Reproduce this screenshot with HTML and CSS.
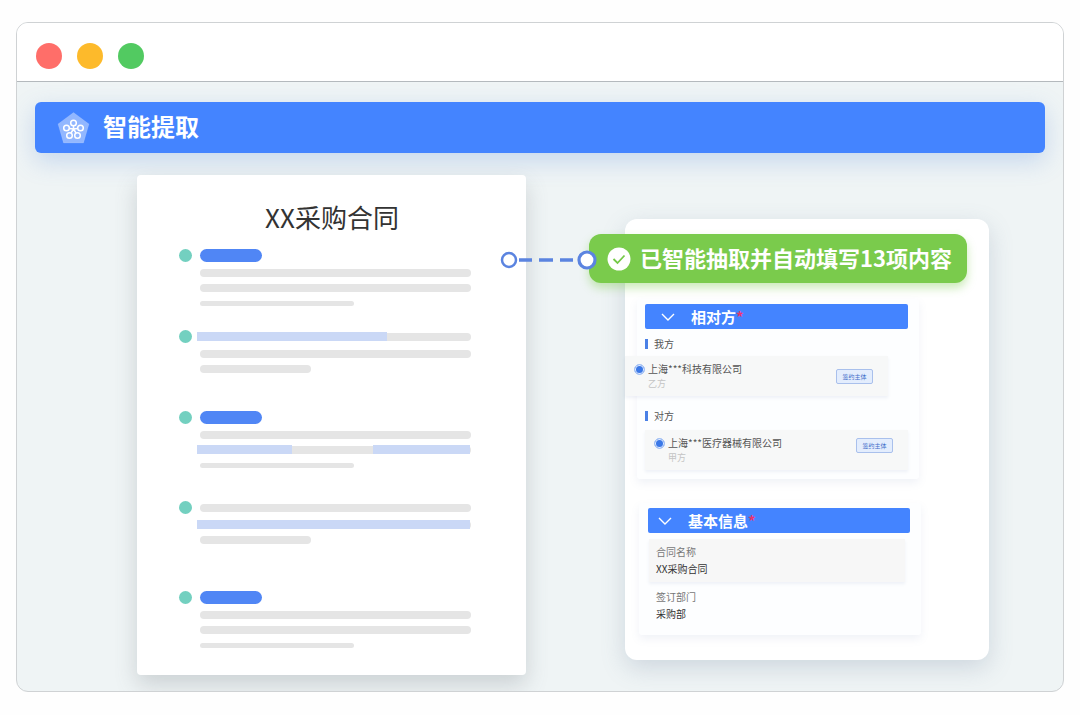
FILE: index.html
```html
<!DOCTYPE html>
<html lang="zh-CN">
<head>
<meta charset="utf-8">
<meta name="viewport" content="width=device-width, initial-scale=1">
<title>智能提取</title>
<link rel="stylesheet" href="styles.css">
</head>
<body>
<div class="window">
  <div class="titlebar">
    <span class="light light-red"></span>
    <span class="light light-yellow"></span>
    <span class="light light-green"></span>
  </div>
  <main class="content">
    <header class="banner">
      <svg class="banner-icon" viewBox="0 0 34 34" aria-hidden="true">
        <path d="M17.500 1.500 33 13 27.500 32H7.500L2 13Z" fill="#fff" fill-opacity=".42" stroke="#fff" stroke-opacity=".1" stroke-linejoin="round"/>
        <g fill="none" stroke="#fff" stroke-width="1.500">
          <path d="M17.500 18V15M17.500 18 13.500 17.500M17.500 18 21.500 17.500M17.500 18 15 22M17.500 18 20 22"/>
          <circle cx="17.500" cy="12" r="2.800"/>
          <circle cx="10.500" cy="17" r="2.800"/>
          <circle cx="24.500" cy="17" r="2.800"/>
          <circle cx="13.500" cy="24.500" r="2.800"/>
          <circle cx="21.500" cy="24.500" r="2.800"/>
        </g>
      </svg>
      <h1 class="banner-title">智能提取</h1>
    </header>

    <div class="stage">
      <article class="document">
        <h2 class="document-title">XX采购合同</h2>
        <div class="clause">
          <span class="dot"></span>
          <div class="lines">
            <div class="head"><span class="pill"></span></div>
            <div class="bar"></div>
            <div class="bar"></div>
            <div class="bar bar-thin"></div>
          </div>
        </div>
        <div class="clause">
          <span class="dot"></span>
          <div class="lines">
            <div class="head"><div class="bar"><span class="mark mark-long"></span></div></div>
            <div class="bar"></div>
            <div class="bar bar-short"></div>
          </div>
        </div>
        <div class="clause">
          <span class="dot"></span>
          <div class="lines">
            <div class="head"><span class="pill"></span></div>
            <div class="bar"></div>
            <div class="bar"><span class="mark mark-start"></span><span class="mark mark-end"></span></div>
            <div class="bar bar-thin"></div>
          </div>
        </div>
        <div class="clause clause-wide">
          <span class="dot"></span>
          <div class="lines">
            <div class="head"><div class="bar"></div></div>
            <div class="bar"><span class="mark mark-full"></span></div>
            <div class="bar bar-short"></div>
          </div>
        </div>
        <div class="clause clause-wide">
          <span class="dot"></span>
          <div class="lines">
            <div class="head"><span class="pill"></span></div>
            <div class="bar"></div>
            <div class="bar"></div>
            <div class="bar bar-thin"></div>
          </div>
        </div>
      </article>

      <aside class="panel">
        <div class="toast" role="status">
          <svg class="connector" viewBox="0 0 98 22" aria-hidden="true">
            <path d="M19 11H32M39 11H53M60 11H73" stroke="#5b84e0" stroke-width="3.500"/>
            <circle cx="9" cy="11" r="7" fill="#fff" stroke="#5b84e0" stroke-width="2.500"/>
            <circle cx="87" cy="11" r="8" fill="#fff" stroke="#5b84e0" stroke-width="3.200"/>
          </svg>
          <svg class="toast-icon" viewBox="0 0 24 24" aria-hidden="true">
            <circle cx="12" cy="12" r="11.500" fill="#fff"/>
            <path d="M6.500 12 10.500 16 17.500 8.500" fill="none" stroke="#74c947" stroke-width="1.800"/>
          </svg>
          <span class="toast-text">已智能抽取并自动填写13项内容</span>
        </div>

        <section class="card card-party">
          <h3 class="card-head">
            <svg class="chevron" viewBox="0 0 14 8" aria-hidden="true"><path d="M1 1 7 7 13 1"/></svg>
            <span>相对方<span class="required">*</span></span>
          </h3>
          <h4 class="group">我方</h4>
          <div class="party party-shifted">
            <input class="radio" type="radio" id="ours" name="ours" checked>
            <label class="party-name" for="ours">上海***科技有限公司<small>乙方</small></label>
            <span class="tag">签约主体</span>
          </div>
          <h4 class="group">对方</h4>
          <div class="party">
            <input class="radio" type="radio" id="theirs" name="theirs" checked>
            <label class="party-name" for="theirs">上海***医疗器械有限公司<small>甲方</small></label>
            <span class="tag">签约主体</span>
          </div>
        </section>

        <section class="card card-basic">
          <h3 class="card-head">
            <svg class="chevron" viewBox="0 0 14 8" aria-hidden="true"><path d="M1 1 7 7 13 1"/></svg>
            <span>基本信息<span class="required">*</span></span>
          </h3>
          <dl class="fields">
            <div class="field field-filled"><dt>合同名称</dt><dd>XX采购合同</dd></div>
            <div class="field"><dt>签订部门</dt><dd>采购部</dd></div>
          </dl>
        </section>
      </aside>
    </div>
  </main>
</div>
</body>
</html>
```
FILE: styles.css
```css
* {
  box-sizing: border-box;
}

body {
  margin: 0;
  padding: 22px 16px;
  background: #fefefe;
  color: #333;
  font-family: "Noto Sans CJK SC", sans-serif;
}

h1, h2, h3, h4, dl, dd {
  margin: 0;
  font-weight: 400;
}

.window {
  border: 1px solid #cfd2d4;
  border-radius: 12px;
  overflow: hidden;
  background: #eff4f5;
}

.titlebar {
  display: flex;
  align-items: center;
  gap: 15px;
  height: 59px;
  padding: 8px 19px 0;
  border-bottom: 1px solid #b4b9bd;
  background: #fff;
}

.light {
  width: 26px;
  height: 26px;
  border-radius: 50%;
}

.light-red { background: #ff6e69; }
.light-yellow { background: #fdba2b; }
.light-green { background: #52ca61; }

.content {
  padding: 20px 18px 16px;
}

.banner {
  display: flex;
  align-items: center;
  gap: 13px;
  height: 51px;
  padding: 0 21px;
  border-radius: 6px;
  background: #4484ff;
  box-shadow: 0 8px 24px rgba(90, 140, 220, .28);
  color: #fff;
}

.banner-icon {
  width: 34px;
  height: 34px;
}

.banner-title {
  padding-bottom: 3px;
  font-size: 24px;
  line-height: 32px;
  font-weight: 700;
}

.stage {
  display: grid;
  grid-template-columns: 389fr 99fr 364fr;
  align-items: start;
  padding: 22px 56px 0 102px;
}

.document {
  min-width: 0;
  padding: 24px 55px 26px 42px;
  border-radius: 4px;
  background: #fff;
  box-shadow: 0 10px 22px rgba(90, 100, 110, .24);
}

.document-title {
  margin-bottom: 14px;
  padding-left: 14px;
  font-size: 26px;
  line-height: 36px;
  text-align: center;
}

.clause {
  display: grid;
  grid-template-columns: 13px 1fr;
  column-gap: 8px;
  align-items: start;
  min-height: 58px;
}

.clause + .clause {
  margin-top: 23px;
}

.clause + .clause-wide {
  margin-top: 32px;
}

.dot {
  width: 13px;
  height: 13px;
  border-radius: 50%;
  background: #73d0c0;
}

.lines {
  display: grid;
  row-gap: 7px;
}

.head {
  display: grid;
  align-items: center;
  height: 13px;
}

.pill {
  width: 62px;
  height: 13px;
  border-radius: 7px;
  background: #5086f5;
}

.bar {
  position: relative;
  height: 8px;
  border-radius: 4px;
  background: #e5e5e5;
}

.bar-short {
  width: 41%;
}

.bar-thin {
  width: 57%;
  height: 5px;
  margin: 2px 0 1px;
}

.mark {
  position: absolute;
  top: -1px;
  bottom: 0;
  left: -3px;
  background: #cad8f6;
}

.mark-long { right: 31%; }
.mark-start { right: 66%; }
.mark-end { left: 64%; right: 1px; }
.mark-full { right: 1px; }

.panel {
  position: relative;
  grid-column: 3;
  min-width: 0;
  margin-top: 44px;
  padding: 80px 0 25px;
  border-radius: 12px;
  background: #fff;
  box-shadow: 0 8px 24px rgba(100, 120, 150, .24);
}

.toast {
  position: absolute;
  top: 15px;
  left: -36px;
  right: 22px;
  display: flex;
  align-items: center;
  gap: 9px;
  height: 49px;
  padding-left: 18px;
  border-radius: 12px;
  background: #7acb4c;
  box-shadow: 0 5px 10px rgba(122, 203, 76, .4);
  color: #fff;
  font-size: 22px;
  line-height: 32px;
  font-weight: 700;
  white-space: nowrap;
}

.toast-text {
  padding-bottom: 3px;
}

.toast-icon {
  width: 24px;
  height: 24px;
}

.connector {
  position: absolute;
  top: 15px;
  left: -89px;
  width: 98px;
  height: 22px;
}

.card {
  border-radius: 3px;
  background: #fdfeff;
  box-shadow: 0 4px 8px rgba(110, 130, 180, .1);
}

.card-party {
  margin: 0 70px 0 12px;
  padding: 5px 11px 9px 8px;
}

.card-basic {
  margin: 24px 68px 0 14px;
  padding: 5px 11px 9px 9px;
}

.card-head {
  display: flex;
  align-items: center;
  gap: 16px;
  height: 25px;
  padding-left: 16px;
  border-radius: 2px;
  background: #4484ff;
  color: #fff;
  font-size: 15px;
  line-height: 24px;
  font-weight: 700;
}

.card-basic .card-head {
  padding-left: 10px;
}

.chevron {
  width: 14px;
  height: 8px;
  fill: none;
  stroke: #fff;
  stroke-width: 1.4;
}

.required {
  color: #e8356f;
}

.group {
  display: flex;
  align-items: center;
  gap: 6px;
  height: 29px;
  color: #555;
  font-size: 10px;
  line-height: 16px;
}

.group::before {
  content: "";
  width: 3px;
  height: 10px;
  background: #4a80e6;
}

.party {
  display: flex;
  align-items: flex-start;
  gap: 3px;
  height: 40px;
  padding: 5px 15px 0 9px;
  background: #f7f8f8;
  box-shadow: 0 2px 3px rgba(110, 130, 180, .1);
}

.party-shifted {
  margin: -2px 20px 5px -20px;
}

.radio {
  flex: none;
  appearance: none;
  width: 11px;
  height: 11px;
  margin: 3px 0 0;
  border: 1px solid #a9c5f5;
  border-radius: 50%;
  background: #3b78e7;
  box-shadow: inset 0 0 0 1px #e4eefe;
}

.party-name {
  flex: 1;
  color: #555;
  font-size: 10px;
  line-height: 16px;
  white-space: nowrap;
}

.party-name small {
  display: block;
  color: #c4c4c4;
  font-size: 9px;
  line-height: 13px;
}

.tag {
  flex: none;
  width: 37px;
  margin-top: 3px;
  border: 1px solid #a9c0ec;
  border-radius: 2px;
  background: #e3edfd;
  color: #3f6dca;
  font-size: 6px;
  line-height: 13px;
  text-align: center;
}

.party-shifted .tag {
  margin-top: 8px;
}

.fields {
  margin: 6px 5px 0 1px;
}

.field {
  padding: 4px 7px;
  font-size: 10px;
  line-height: 17px;
}

.field-filled {
  margin-bottom: 2px;
  padding-bottom: 5px;
  background: #f7f7f7;
  box-shadow: 0 2px 3px rgba(110, 130, 180, .1);
}

.field dt {
  color: #777;
}

.field dd {
  color: #333;
}
```
